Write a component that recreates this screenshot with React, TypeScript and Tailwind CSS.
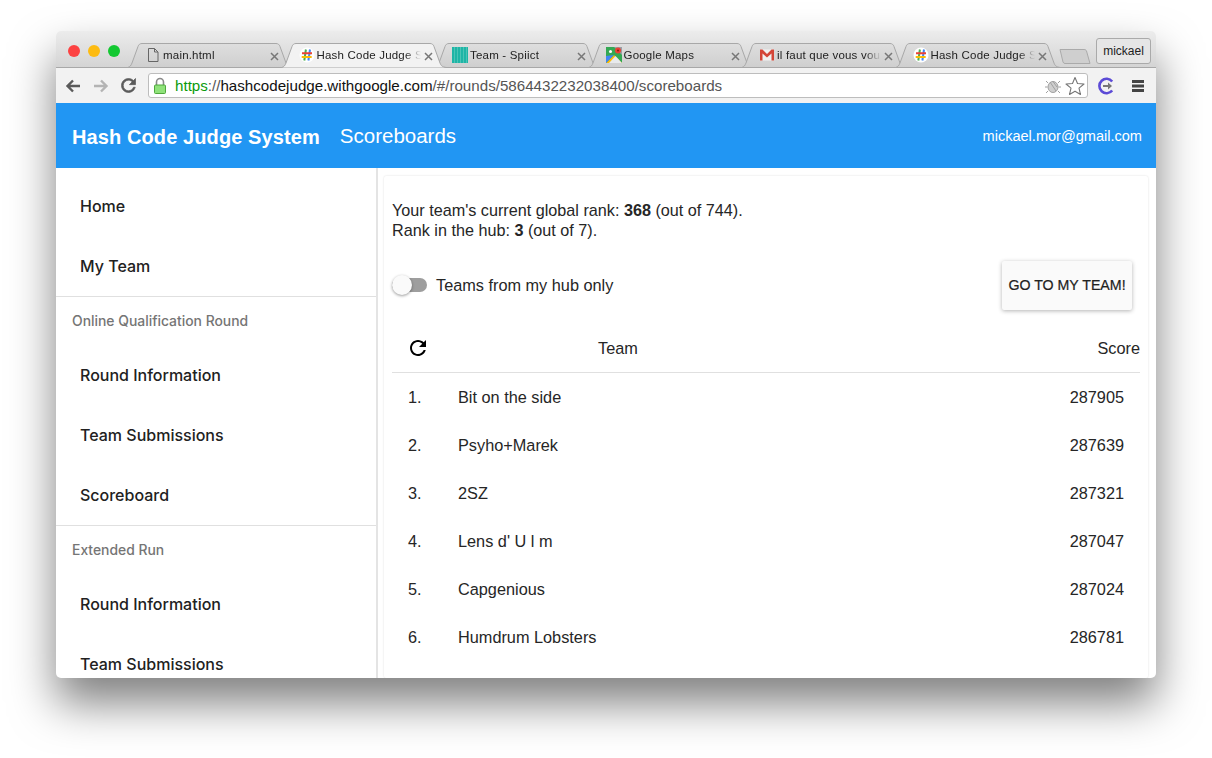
const scores = [
  ["1.", "Bit on the side", "287905"],
  ["2.", "Psyho+Marek", "287639"],
  ["3.", "2SZ", "287321"],
  ["4.", "Lens d' U l m", "287047"],
  ["5.", "Capgenious", "287024"],
  ["6.", "Humdrum Lobsters", "286781"],
];

function DocIcon() {
  return (
    <svg width="16" height="16" viewBox="0 0 16 16" fill="none">
      <path d="M3.500 1.500h6l3.500 3.500v9.500h-9.500z M9.500 1.500v3.500h3.500" stroke="#666" strokeWidth="1" />
    </svg>
  );
}

function HashIcon() {
  return (
    <svg width="16" height="16" viewBox="0 0 16 16" fill="none">
      <circle cx="8" cy="8" r="7.500" fill="#fff" />
      <path d="M6.900 2.500 5.300 13.500" stroke="#4caf50" strokeWidth="2" />
      <path d="M11 2.500 9.400 13.500" stroke="#4285f4" strokeWidth="2" />
      <path d="M3 6.200h10" stroke="#ea4335" strokeWidth="2" />
      <path d="M2.700 10h10" stroke="#fbbc05" strokeWidth="2" />
    </svg>
  );
}

function TeamIcon() {
  return (
    <svg width="16" height="16" viewBox="0 0 16 16">
      <rect width="16" height="16" fill="#1fb5a6" />
      <path d="M2.500 0v16M5.500 0v16M8.500 0v16M11.500 0v16M14.500 0v16" stroke="#5fcabd" strokeWidth="0.700" />
    </svg>
  );
}

function MapsIcon() {
  return (
    <svg width="16" height="16" viewBox="0 0 16 16">
      <rect width="16" height="16" fill="#34a853" />
      <path d="M0 16 8 8l8 8z" fill="#fbbc05" />
      <path d="M0 16V9l8-1z" fill="#4285f4" />
      <path d="M3 16 9.500 9 16 16z" fill="#e8eaed" />
      <path d="M8 0h8v8z" fill="#9aa0a6" />
      <circle cx="12" cy="3.500" r="3" fill="#ea4335" />
      <circle cx="12" cy="3.500" r="1" fill="#8e1a12" />
      <circle cx="4.500" cy="4.500" r="1.500" fill="#fff" />
    </svg>
  );
}

function GmailIcon() {
  return (
    <svg width="16" height="16" viewBox="0 0 16 16">
      <rect x="1" y="2.500" width="14" height="11" fill="#f1f1f1" />
      <path d="M1 2.500h2.500L8 7l4.500-4.500H15v11h-2.500V6.500L8 10.500 3.500 6.500v7H1z" fill="#d44638" />
    </svg>
  );
}

function Close() {
  return (
    <svg width="9" height="9" viewBox="0 0 9 9" className="absolute left-[137px] top-[9px]">
      <path d="M1 1l7 7M8 1 1 8" stroke="#777" strokeWidth="1.500" />
    </svg>
  );
}

function Tab({ title, icon, active }: { title: string; icon: React.ReactNode; active?: boolean }) {
  return (
    <div className={`relative flex h-6 w-[153.500px] items-center pl-[12px] ${active ? "z-10" : ""}`}>
      <svg width="166" height="25" viewBox="0 0 166 25" className="absolute -left-[6px] top-0">
        <defs>
          <linearGradient id="tabIdle" x1="0" y1="0" x2="0" y2="1">
            <stop offset="0" stopColor="#dedede" />
            <stop offset="1" stopColor="#cfcfcf" />
          </linearGradient>
        </defs>
        <path
          d={`M0.500 24.500C3 24 4 22.500 5 20L11 3.500C11.700 1.500 13 0.500 15 0.500H149C151 0.500 152.300 1.500 153 3.500L159 20C160 22.500 161 24 165.500 24.500${active ? "" : "Z"}`}
          fill={active ? "#f2f2f2" : "url(#tabIdle)"}
          stroke="#a8a8a8"
        />
      </svg>
      <div className="relative h-4 w-4 shrink-0">{icon}</div>
      <span className="relative ml-[2px] w-[104px] whitespace-nowrap pt-[2px] text-[11.500px] tracking-[0.2px] text-[#222] [mask-image:linear-gradient(to_right,black_85%,transparent)]">
        {title}
      </span>
      <Close />
    </div>
  );
}

function NavItem({ label }: { label: string }) {
  return (
    <div className="flex h-[60px] shrink-0 items-center pl-6 text-[16px] font-medium text-[#212121] [font-family:Inter,sans-serif]">
      {label}
    </div>
  );
}

function NavLabel({ label }: { label: string }) {
  return (
    <div className="flex h-[49px] shrink-0 items-center border-t border-[#e0e0e0] pl-4 text-[13.900px] font-medium text-[#757575] [font-family:Inter,sans-serif]">
      {label}
    </div>
  );
}

export default function App() {
  return (
    <div className="h-[758px] w-[1212px] overflow-hidden bg-white pl-14 pt-[31px] [font-family:'Liberation_Sans',sans-serif]">
      <div className="flex h-[647px] w-[1100px] flex-col overflow-hidden rounded-[5px] bg-white shadow-[0_25px_45px_rgba(0,0,0,0.5)]">
        {/* Tab strip */}
        <div className="relative flex h-[37px] shrink-0 border-b border-[#a8a8a8] bg-gradient-to-b from-[#ececec] to-[#d4d4d4] pl-[77px] pt-3">
          <div className="absolute left-[12px] top-[14px] flex gap-2">
            <div className="h-3 w-3 rounded-full bg-[#fc4242]" />
            <div className="h-3 w-3 rounded-full bg-[#fdbb11]" />
            <div className="h-3 w-3 rounded-full bg-[#13c831]" />
          </div>
          <Tab title="main.html" icon={<DocIcon />} />
          <Tab title="Hash Code Judge S" icon={<HashIcon />} active />
          <Tab title="Team - Spiict" icon={<TeamIcon />} />
          <Tab title="Google Maps" icon={<MapsIcon />} />
          <Tab title="il faut que vous vou" icon={<GmailIcon />} />
          <Tab title="Hash Code Judge S" icon={<HashIcon />} />
          <svg width="32" height="17" viewBox="0 0 32 17" className="ml-[5px] mt-[5px]">
            <path d="M1 1.500H25C26.500 1.500 27 2 27.500 3L31 15.500H6C5 15.500 4.500 15 4 14L1 1.500z" fill="#cfcfcf" stroke="#aaa" />
          </svg>
          <div className="absolute right-[5px] top-[7px] flex h-[26px] w-[55px] items-center justify-center rounded-[3px] border border-[#aaa] bg-[#e6e6e6] text-[12px] text-[#222]">
            mickael
          </div>
        </div>

        {/* Toolbar */}
        <div className="flex h-[35px] shrink-0 items-center bg-[#f2f2f2] pl-[9px]">
          <svg width="16" height="16" viewBox="0 0 16 16" fill="none">
            <path d="M15 8H3M8 2.500 2.500 8 8 13.500" stroke="#5a5a5a" strokeWidth="2.400" />
          </svg>
          <svg width="16" height="16" viewBox="0 0 16 16" fill="none" className="ml-[12px]">
            <path d="M1 8h12M8 2.500 13.500 8 8 13.500" stroke="#b4b4b4" strokeWidth="2.400" />
          </svg>
          <svg width="21" height="21" viewBox="0 0 24 24" className="ml-[9px]">
            <path
              d="M17.650 6.350C16.200 4.900 14.210 4 12 4c-4.420 0-7.990 3.580-7.990 8s3.570 8 7.990 8c3.730 0 6.840-2.550 7.730-6h-2.080c-.82 2.330-3.040 4-5.650 4-3.310 0-6-2.690-6-6s2.690-6 6-6c1.660 0 3.140.69 4.220 1.780L13 11h7V4l-2.350 2.350z"
              fill="#5a5a5a"
              stroke="#5a5a5a"
              strokeWidth="0.800"
            />
          </svg>
          <div className="ml-[9px] flex h-[25px] w-[940px] items-center rounded-[3px] border border-[#bdbdbd] bg-white pl-[4px]">
            <svg width="14" height="18" viewBox="0 0 14 18" fill="none">
              <path d="M3.500 8V5a3.500 3.500 0 0 1 7 0v3" stroke="#8a8a8a" strokeWidth="1.600" />
              <rect x="1.500" y="8" width="11" height="8.500" rx="1" fill="#8fe27a" stroke="#4fa83d" />
            </svg>
            <span className="ml-[8px] whitespace-nowrap pt-[2px] text-[15.150px] text-[#555]">
              <span className="text-[#0b9a0b]">https</span>://<span className="text-[#111]">hashcodejudge.withgoogle.com</span>/#/rounds/5864432232038400/scoreboards
            </span>
            <div className="ml-auto flex items-center gap-[4px] pr-[2px]">
              <svg width="16" height="16" viewBox="0 0 16 16" fill="none">
                <ellipse cx="8" cy="9" rx="5" ry="5.500" fill="#cfcfcf" stroke="#a0a0a0" />
                <path d="M3 5 1 3M13 5l2-2M2.500 9H0M13.500 9H16M3 13l-2 2M13 13l2 2M5 4l6 9M8 3.500 12 9" stroke="#a0a0a0" />
              </svg>
              <svg width="20" height="20" viewBox="0 0 20 20" fill="#fff">
                <path d="M10 1.500 12.500 7.500 19 8l-5 4.200L15.500 18.500 10 15.200 4.500 18.500 6 12.200 1 8l6.500-.5z" stroke="#777" strokeWidth="1.100" strokeLinejoin="round" />
              </svg>
            </div>
          </div>
          <svg width="18" height="18" viewBox="0 0 18 18" fill="none" className="ml-[9px]">
            <path d="M15.200 4.500A7.200 7.200 0 1 0 15.200 13.500" stroke="#5c4bd6" strokeWidth="2.600" />
            <path d="M6 9h6" stroke="#777" strokeWidth="2" />
            <path d="M11 5.500 15 9l-4 3.500z" fill="#777" />
          </svg>
          <svg width="14" height="14" viewBox="0 0 14 14" className="ml-[16px]">
            <path d="M1 2.500h12M1 7h12M1 11.500h12" stroke="#444" strokeWidth="2.800" />
          </svg>
        </div>

        {/* App bar */}
        <div className="flex h-[65px] shrink-0 items-center bg-[#2196f3] pl-4 pr-[14px] text-white">
          <span className="pt-[2px] text-[20px] font-bold tracking-[0.1px]">Hash Code Judge System</span>
          <span className="ml-5 pt-[1px] text-[20.500px]">Scoreboards</span>
          <span className="ml-auto pt-[2px] text-[14.550px]">mickael.mor@gmail.com</span>
        </div>

        {/* Body */}
        <div className="flex min-h-0 flex-1 overflow-hidden">
          <div className="flex w-[320px] shrink-0 flex-col pt-2">
            <NavItem label="Home" />
            <NavItem label="My Team" />
            <NavLabel label="Online Qualification Round" />
            <NavItem label="Round Information" />
            <NavItem label="Team Submissions" />
            <NavItem label="Scoreboard" />
            <NavLabel label="Extended Run" />
            <NavItem label="Round Information" />
            <NavItem label="Team Submissions" />
          </div>
          <div className="w-[2px] shrink-0 bg-[#e4e4e4]" />
          <div className="flex-1 pl-[6px] pr-[8px] pt-2">
            <div className="h-full rounded-[2px] px-2 pt-[24px] text-[16.300px] leading-5 text-[#262626] shadow-[0_0_2px_rgba(0,0,0,0.15)]">
              <p className="text-[16.200px]">
                Your team's current global rank: <b>368</b> (out of 744).
                <br />
                Rank in the hub: <b>3</b> (out of 7).
              </p>

              <div className="mt-[20px] flex h-[50px] items-center">
                <div className="relative h-[14px] w-[35px] rounded-full bg-[#9e9e9e]">
                  <div className="absolute -top-[3px] left-0 h-5 w-5 rounded-full bg-[#fafafa] shadow-[0_1px_3px_rgba(0,0,0,0.4)]" />
                </div>
                <span className="ml-[9px]">Teams from my hub only</span>
                <button className="ml-auto mr-[8px] h-[49px] w-[130px] rounded-[2px] bg-[#fafafa] text-[14.200px] font-medium text-[#212121] shadow-[0_1px_4px_rgba(0,0,0,0.3)] [-webkit-text-stroke:0.2px_#212121]">
                  GO TO MY TEAM!
                </button>
              </div>

              <div className="mt-[15px] flex h-12 items-center border-b border-[#e0e0e0] pb-[2px]">
                <svg width="24" height="24" viewBox="0 0 24 24" className="ml-[14px]">
                  <path d="M17.650 6.350C16.200 4.900 14.210 4 12 4c-4.420 0-7.990 3.580-7.990 8s3.570 8 7.990 8c3.730 0 6.840-2.550 7.730-6h-2.080c-.82 2.330-3.040 4-5.650 4-3.310 0-6-2.690-6-6s2.690-6 6-6c1.660 0 3.140.69 4.220 1.780L13 11h7V4l-2.350 2.350z" fill="#000" />
                </svg>
                <span className="ml-[168px]">Team</span>
                <span className="ml-auto">Score</span>
              </div>

              {scores.map(([rank, team, score]) => (
                <div key={rank} className="flex h-12 items-center">
                  <span className="ml-4 w-[50px]">{rank}</span>
                  <span>{team}</span>
                  <span className="ml-auto mr-4">{score}</span>
                </div>
              ))}
            </div>
          </div>
        </div>
      </div>
    </div>
  );
}
